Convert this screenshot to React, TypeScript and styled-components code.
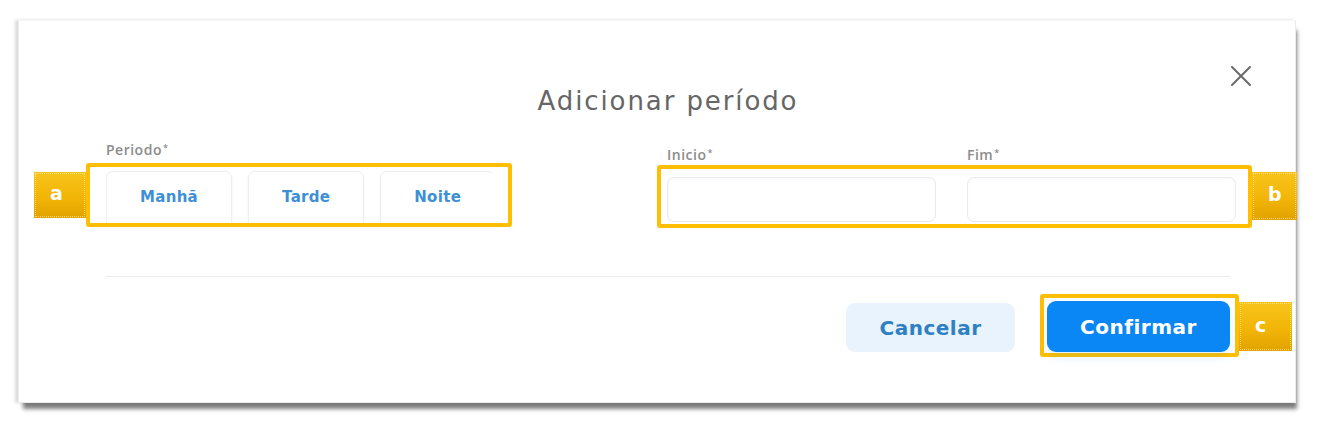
import React from "react";
import styled, { createGlobalStyle } from "styled-components";

const GlobalStyle = createGlobalStyle`
  html, body {
    margin: 0;
    background: #fff;
  }
  body {
    font-family: "Open Sans", "Liberation Sans", sans-serif;
  }
`;

const Page = styled.div`
  min-height: 100vh;
  box-sizing: border-box;
  padding: 20px 26px 0 18px;
`;

const Modal = styled.div`
  height: 383px;
  box-sizing: border-box;
  background: #fff;
  border: 1px solid #ececec;
  border-top-color: #f6f6f6;
  box-shadow: 3px 8px 4px -2px rgba(0, 0, 0, 0.5), -3px 0 3px rgba(0, 0, 0, 0.14);
  padding: 45px 65px 0 87px;
`;

const Header = styled.div`
  display: grid;
  grid-template-columns: 1fr auto 1fr;
  align-items: start;
`;

const Title = styled.h2`
  grid-column: 2;
  margin: 21px 0 0;
  font-family: "DejaVu Sans", "Open Sans", sans-serif;
  font-size: 26px;
  line-height: 29px;
  font-weight: 400;
  letter-spacing: 1.9px;
  color: #666;
`;

const CloseButton = styled.button`
  grid-column: 3;
  justify-self: end;
  margin-right: -22px;
  padding: 0;
  border: 0;
  background: none;
  width: 22px;
  height: 20px;
  cursor: pointer;
  display: flex;
`;

const Fields = styled.div`
  display: grid;
  grid-template-columns: 561px 1fr;
  margin-top: 26px;
`;

const Column = styled.div<{ $offset?: number }>`
  display: flex;
  flex-direction: column;
  padding-top: ${(p) => p.$offset ?? 0}px;
`;

const Label = styled.label`
  font-size: 14px;
  line-height: 16px;
  font-weight: 600;
  letter-spacing: 0.5px;
  color: #8c8c8c;
`;

const Req = styled.span`
  font-size: 9px;
  vertical-align: top;
  line-height: 12px;
  margin-left: 1px;
`;

const Highlight = styled.div<{ $pad: string; $shift?: string }>`
  position: relative;
  box-sizing: border-box;
  border: 4px solid #ffbf00;
  border-radius: 3px;
  padding: ${(p) => p.$pad};
  margin: ${(p) => p.$shift ?? "0"};
`;

const Clip = styled.div`
  display: flex;
  gap: 16px;
  height: 52px;
  overflow: hidden;
  align-items: flex-start;
`;

const Badge = styled.span<{ $side: "left" | "right"; $top: number; $w: number; $h: number }>`
  position: absolute;
  top: ${(p) => p.$top}px;
  ${(p) => (p.$side === "left" ? `right: calc(100% + 4px);` : `left: calc(100% + 4px);`)}
  width: ${(p) => p.$w}px;
  height: ${(p) => p.$h}px;
  box-sizing: border-box;
  padding-left: 16px;
  display: flex;
  align-items: center;
  background: linear-gradient(180deg, #f8c41c 0%, #f2b507 55%, #e2a200 100%);
  outline: 1px dotted rgba(255, 236, 170, 0.7);
  outline-offset: -2px;
  color: #fff;
  font-family: "DejaVu Sans", "Liberation Sans", sans-serif;
  font-weight: 700;
  font-size: 19px;
  line-height: 1;
  padding-bottom: 3px;
`;

const PeriodButton = styled.button`
  flex: none;
  height: 56px;
  padding: 0 33px 4px;
  border: 1px solid #eceef1;
  border-radius: 7px;
  background: #fff;
  box-shadow: 0 1px 3px rgba(0, 0, 0, 0.05);
  font-family: "DejaVu Sans", "Liberation Sans", sans-serif;
  font-size: 15px;
  font-weight: 700;
  letter-spacing: 0.3px;
  color: #3d8fd6;
  cursor: pointer;
`;

const InputRow = styled.div`
  display: grid;
  grid-template-columns: 269px 269px;
  column-gap: 31px;
`;

const Input = styled.input`
  box-sizing: border-box;
  height: 45px;
  border: 1px solid #e7eaee;
  border-radius: 7px;
  background: #fff;
  box-shadow: inset 0 1px 2px rgba(0, 0, 0, 0.03);
  outline: none;
`;

const Divider = styled.hr`
  margin: 48px 0 0;
  border: 0;
  border-top: 1px solid #ebebeb;
`;

const Footer = styled.div`
  display: flex;
  justify-content: flex-end;
  align-items: flex-end;
  gap: 25px;
  margin-top: 17px;
`;

const ActionButton = styled.button<{ $primary?: boolean }>`
  width: ${(p) => (p.$primary ? 183 : 169)}px;
  height: ${(p) => (p.$primary ? 51 : 49)}px;
  margin-bottom: ${(p) => (p.$primary ? 0 : 5)}px;
  display: block;
  border: 0;
  border-radius: 9px;
  background: ${(p) => (p.$primary ? "#0a87f4" : "#e8f3fd")};
  color: ${(p) => (p.$primary ? "#fff" : "#2f7fc3")};
  box-shadow: ${(p) => (p.$primary ? "0 5px 10px rgba(10, 135, 244, 0.12)" : "none")};
  font-family: "DejaVu Sans", "Liberation Sans", sans-serif;
  font-size: 20px;
  font-weight: 700;
  letter-spacing: 0.5px;
  cursor: pointer;
`;

const CloseIcon = () => (
  <svg width="22" height="20" viewBox="0 0 22 20" fill="none">
    <path d="M2 1L20 19M20 1L2 19" stroke="#6b6b6b" strokeWidth="2" strokeLinecap="round" />
  </svg>
);

const periods = ["Manhã", "Tarde", "Noite"];

export default function App() {
  return (
    <Page>
      <GlobalStyle />
      <Modal>
        <Header>
          <Title>Adicionar período</Title>
          <CloseButton aria-label="Fechar">
            <CloseIcon />
          </CloseButton>
        </Header>

        <Fields>
          <Column>
            <Label>
              Periodo<Req>*</Req>
            </Label>
            <Highlight $pad="4px 16px 0" $shift="5px 0 0 -20px" style={{ width: 426 }}>
              <Badge $side="left" $top={5} $w={52} $h={46}>
                a
              </Badge>
              <Clip>
                {periods.map((p) => (
                  <PeriodButton key={p}>{p}</PeriodButton>
                ))}
              </Clip>
            </Highlight>
          </Column>

          <Column $offset={5}>
            <InputRow>
              <Label>
                Inicio<Req>*</Req>
              </Label>
              <Label>
                Fim<Req>*</Req>
              </Label>
            </InputRow>
            <Highlight $pad="8px 12px 2px 6px" $shift="2px 0 0 -10px" style={{ width: 595 }}>
              <Badge $side="right" $top={3} $w={45} $h={48}>
                b
              </Badge>
              <InputRow>
                <Input />
                <Input />
              </InputRow>
            </Highlight>
          </Column>
        </Fields>

        <Divider />

        <Footer>
          <ActionButton>Cancelar</ActionButton>
          <Highlight $pad="3px 5px 1px 3px" $shift="0 -9px 0 0">
            <Badge $side="right" $top={4} $w={53} $h={49}>
              c
            </Badge>
            <ActionButton $primary>Confirmar</ActionButton>
          </Highlight>
        </Footer>
      </Modal>
    </Page>
  );
}
